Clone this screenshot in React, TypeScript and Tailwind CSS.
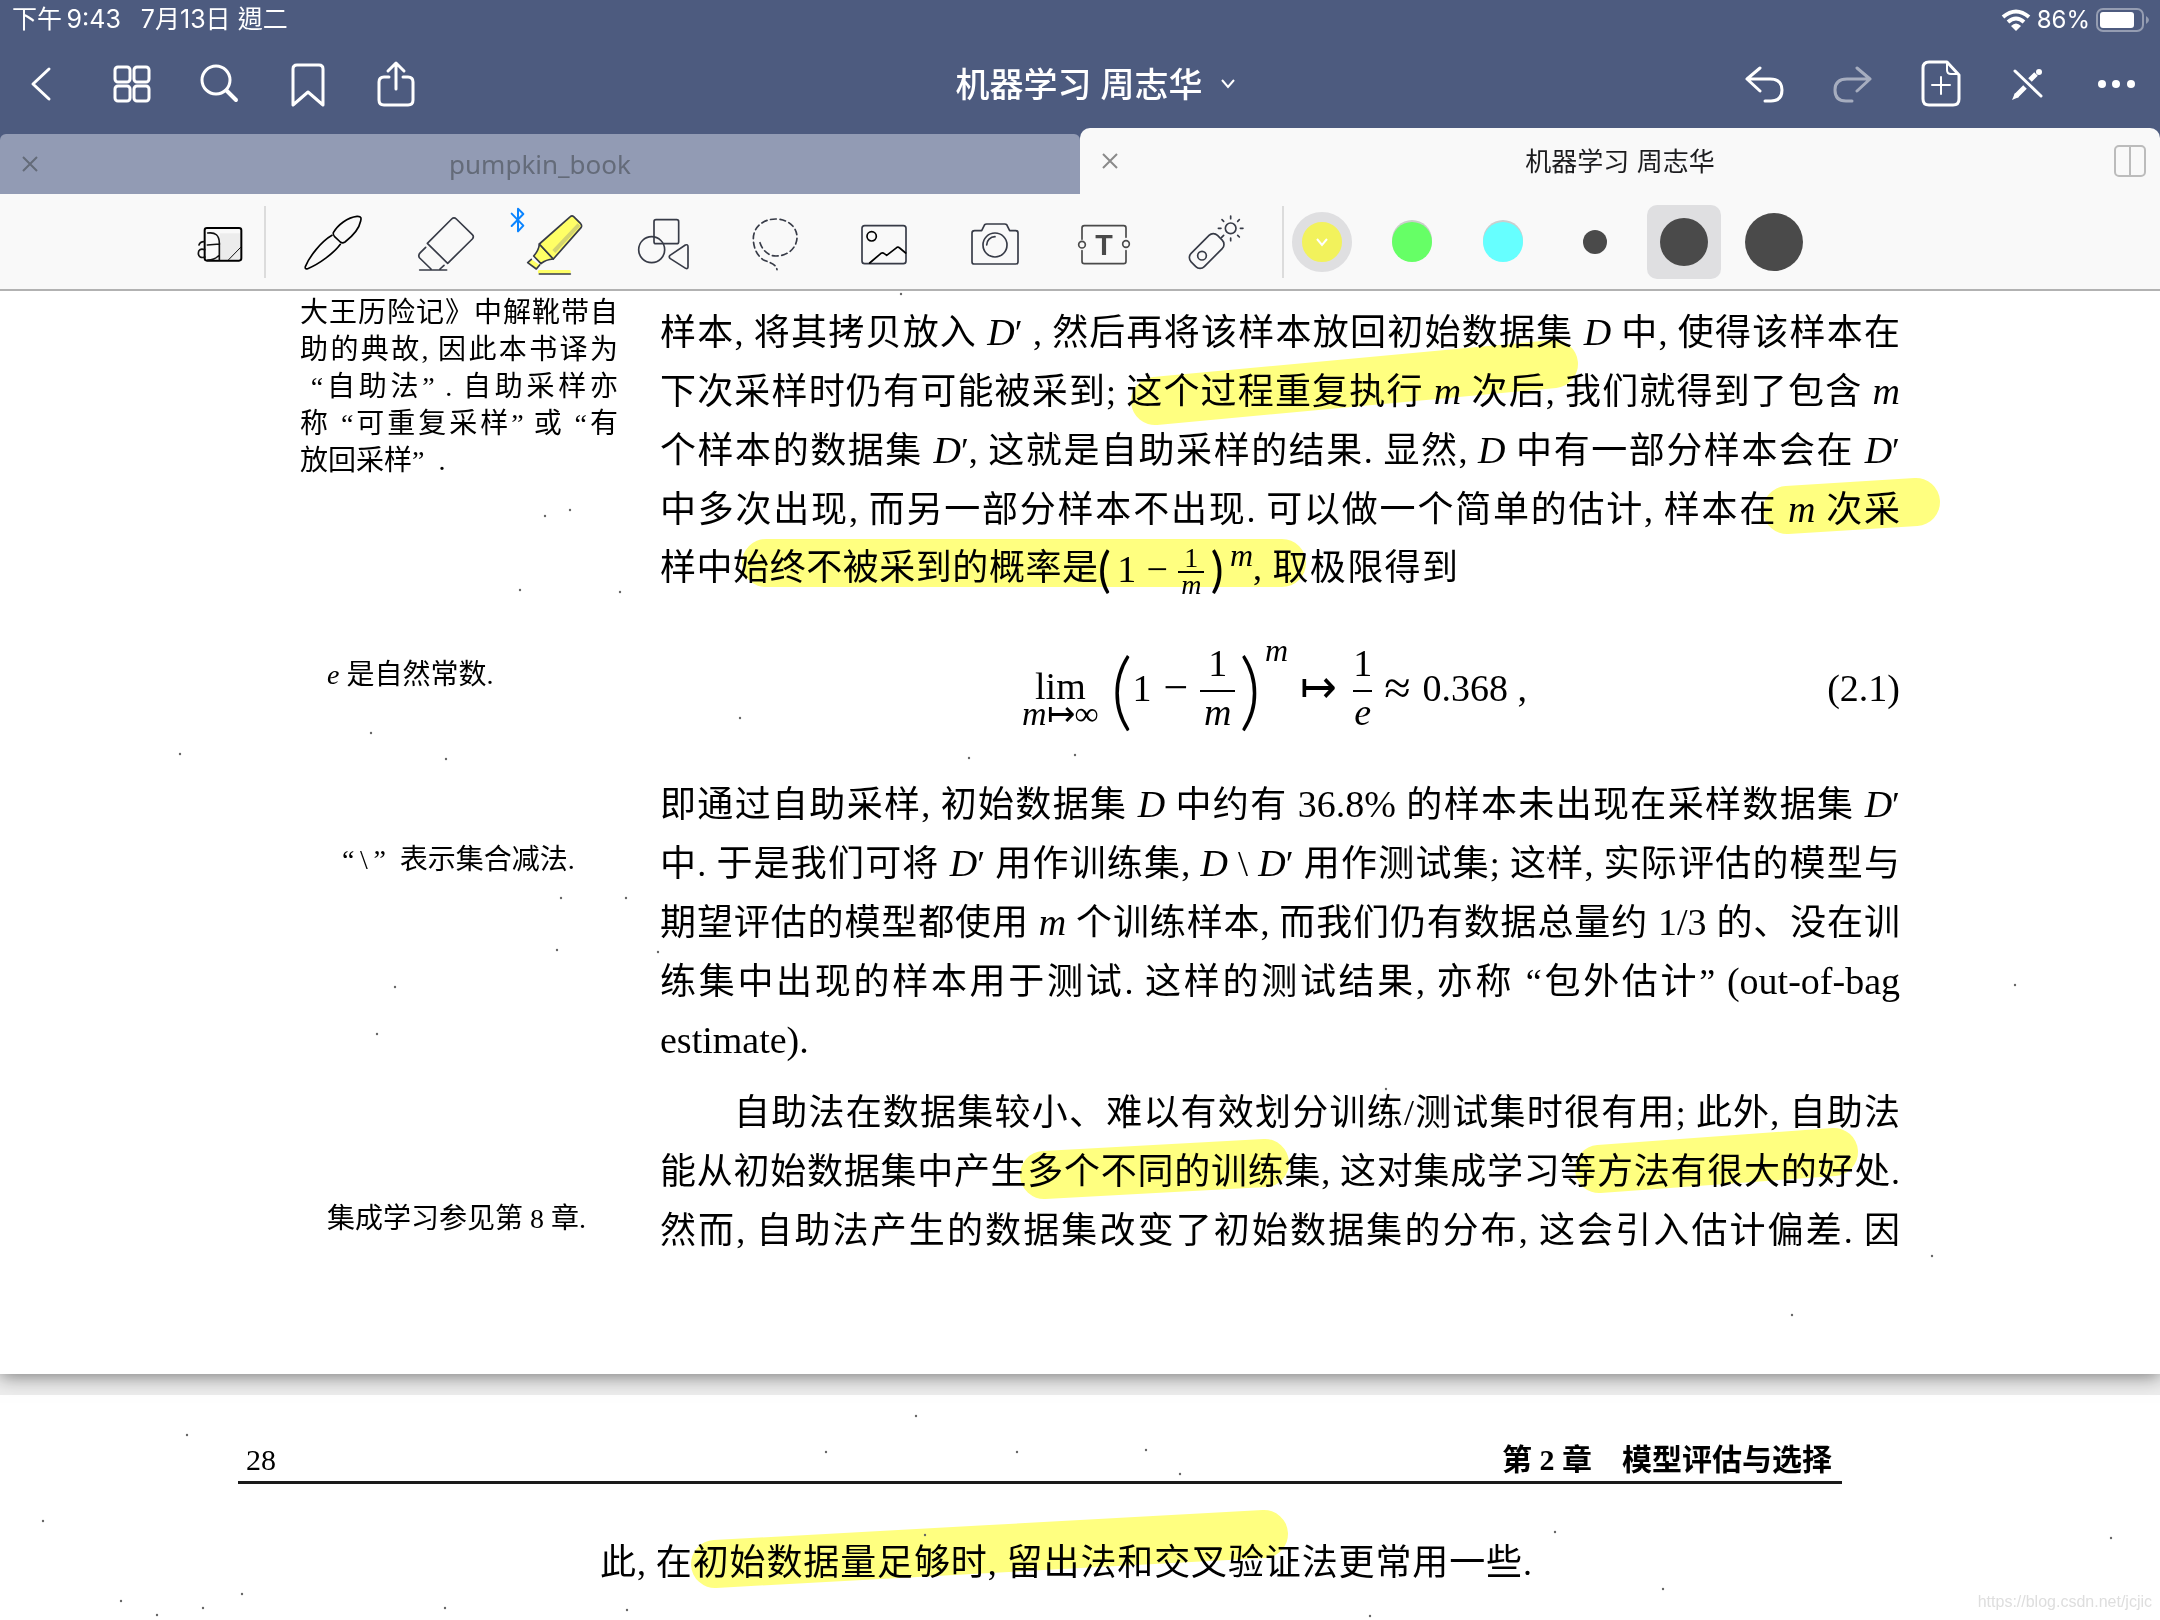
import React, { useState } from "react";

type Stroke = { x1: number; y1: number; x2: number; y2: number };

const pageOneStrokes: Stroke[] = [
  { x1: 1155, y1: 401, x2: 1554, y2: 364 },
  { x1: 1787, y1: 510, x2: 1916, y2: 502 },
  { x1: 766, y1: 563, x2: 1282, y2: 563 },
  { x1: 1044, y1: 1175, x2: 1265, y2: 1163 },
  { x1: 1599, y1: 1169, x2: 1834, y2: 1152 },
];

const pageTwoStrokes: Stroke[] = [{ x1: 715, y1: 1564, x2: 1264, y2: 1534 }];

// scanner dust on the paper
const pageOneDust = [
  [180, 754], [371, 733], [545, 516], [570, 510], [901, 294], [557, 950],
  [658, 952], [446, 759], [520, 590], [395, 987], [2015, 985], [1932, 1256],
  [1792, 1315], [1548, 858], [969, 758], [1075, 755], [377, 1034], [620, 592],
  [398, 447], [561, 898], [626, 898], [1386, 1089], [740, 718],
];

const pageTwoDust = [
  [43, 1521], [157, 1615], [627, 1610], [1017, 1452], [1146, 1450], [1180, 1474],
  [826, 1452], [187, 1435], [2111, 1538], [1555, 1532], [1663, 1589], [242, 1594],
  [121, 1601], [203, 1608], [445, 1608], [925, 1535], [1370, 1616], [916, 1416],
];

const NavButton = ({
  label,
  children,
  faded,
}: {
  label: string;
  children: React.ReactNode;
  faded?: boolean;
}) => (
  <button
    type="button"
    aria-label={label}
    className={
      "flex h-[88px] w-[88px] items-center justify-center text-white " +
      (faded ? "opacity-50" : "")
    }
  >
    <svg
      viewBox="0 0 48 48"
      className="h-12 w-12"
      fill="none"
      stroke="currentColor"
      strokeWidth="3"
      strokeLinecap="round"
      strokeLinejoin="round"
    >
      {children}
    </svg>
  </button>
);

const ToolButton = ({
  label,
  children,
}: {
  label: string;
  children: React.ReactNode;
}) => (
  <button
    type="button"
    aria-label={label}
    className="flex h-24 w-[110px] items-center justify-center"
  >
    <svg
      viewBox="0 0 192 192"
      className="h-16 w-16 overflow-visible"
      fill="none"
      stroke="#373b47"
      strokeWidth="5"
      strokeLinecap="round"
      strokeLinejoin="round"
    >
      {children}
    </svg>
  </button>
);

const CloseIcon = () => (
  <svg viewBox="0 0 16 16" className="h-4 w-4" stroke="currentColor" strokeWidth="2">
    <path d="M1 1L15 15M15 1L1 15" />
  </svg>
);

const Marks = ({
  viewBox,
  strokes,
  dust,
}: {
  viewBox: string;
  strokes: Stroke[];
  dust: number[][];
}) => (
  <svg
    viewBox={viewBox}
    className="pointer-events-none absolute left-0 top-0 w-full mix-blend-multiply"
    aria-hidden="true"
  >
    {strokes.map((s) => (
      <line key={s.x1} {...s} stroke="#ffff80" strokeWidth="48" strokeLinecap="round" />
    ))}
    {dust.map(([x, y]) => (
      <circle key={x + "-" + y} cx={x} cy={y} r="1.2" fill="#666" />
    ))}
  </svg>
);

const Line = ({ children }: { children: React.ReactNode }) => (
  <span className="block h-[59px] whitespace-nowrap text-justify [text-align-last:justify]">
    {children}
  </span>
);

const NoteLine = ({ children }: { children: React.ReactNode }) => (
  <span className="block whitespace-nowrap text-justify [text-align-last:justify]">
    {children}
  </span>
);

const V = ({ children }: { children: React.ReactNode }) => (
  <i className="text-[38px]">{children}</i>
);

const Latin = ({ children }: { children: React.ReactNode }) => (
  <span className="text-[38px]">{children}</span>
);

const InlineFormula = () => (
  <span className="flex h-[59px] w-[155px] items-center justify-between leading-none">
    <span className="text-[48px] [font-family:Lato,sans-serif]">(</span>
    <span className="text-[38px]">1</span>
    <span className="px-1 text-[38px]">−</span>
    <span className="flex flex-col items-center pt-1 text-[28px]">
      <span className="border-b-2 border-black px-[6px] leading-[26px]">1</span>
      <i className="leading-6">m</i>
    </span>
    <span className="text-[48px] [font-family:Lato,sans-serif]">)</span>
    <i className="self-start text-[32px] leading-8">m</i>
  </span>
);

const Header = () => (
  <header className="bg-[#4d5b7f] text-white">
    <div className="flex h-10 items-center justify-between pl-3 pr-[10px] text-[25px] [font-family:Inter,'Noto_Sans_CJK_TC',sans-serif]">
      <div className="flex gap-5">
        <span>下午&thinsp;9:43</span>
        <span>7月13日 週二</span>
      </div>
      <div className="flex items-center gap-[6px]">
        <svg viewBox="0 0 30 22" className="h-[22px] w-[30px]" fill="none" stroke="white" strokeWidth="4">
          <path d="M2 8Q15 -3 28 8" />
          <path d="M7 13Q15 6 23 13" />
          <path d="M10 17Q15 12 20 17L15 22Z" fill="white" stroke="none" />
        </svg>
        <span className="text-[24px]">86%</span>
        <svg viewBox="0 0 54 24" className="h-6 w-[54px]">
          <rect x="1" y="1" width="46" height="22" rx="6" fill="none" stroke="#959db2" strokeWidth="2" />
          <rect x="4" y="4" width="34" height="16" rx="3" fill="white" />
          <path d="M50 8Q53 10 53 12Q53 14 50 16Z" fill="#959db2" />
        </svg>
      </div>
    </div>

    <nav className="grid h-[88px] grid-cols-[1fr_auto_1fr] items-center">
      <div className="flex">
        <NavButton label="返回">
          <path d="M29 9L13 24L29 39" />
        </NavButton>
        <NavButton label="缩略图">
          <rect x="7" y="7" width="15" height="15" rx="3" />
          <rect x="26" y="7" width="15" height="15" rx="3" />
          <rect x="7" y="26" width="15" height="15" rx="3" />
          <rect x="26" y="26" width="15" height="15" rx="3" />
        </NavButton>
        <NavButton label="搜索">
          <circle cx="20" cy="20" r="14" />
          <path d="M31 31L40 40" strokeWidth="4" />
        </NavButton>
        <NavButton label="书签">
          <path d="M9 45V9Q9 5 13 5H35Q39 5 39 9V45L24 32Z" />
        </NavButton>
        <NavButton label="分享">
          <path d="M17 17H12Q7 17 7 22V40Q7 45 12 45H36Q41 45 41 40V22Q41 17 36 17H31" />
          <path d="M24 29V4M16 11L24 3L32 11" />
        </NavButton>
      </div>
      <button
        type="button"
        className="flex items-center gap-[18px] pl-[30px] text-[34px] font-medium [font-family:Inter,'Noto_Sans_CJK_SC',sans-serif]"
      >
        机器学习 周志华
        <svg viewBox="0 0 14 10" className="h-[10px] w-[14px]" fill="none" stroke="white" strokeWidth="2">
          <path d="M1 1L7 8L13 1" />
        </svg>
      </button>
      <div className="flex justify-end">
        <NavButton label="撤销">
          <path d="M20 8L7 19L20 31M8 19H30Q42 19 42 30Q42 41 31 41H25" />
        </NavButton>
        <NavButton label="重做" faded>
          <path d="M29 8L42 19L29 31M41 19H19Q7 19 7 30Q7 41 18 41H24" />
        </NavButton>
        <NavButton label="添加页面">
          <path d="M31 2H13Q7 2 7 8V39Q7 45 13 45H37Q43 45 43 39V15Z" />
          <path d="M31 3V10Q31 14 35 14H42M25 17V34M16 25H34" strokeWidth="2" />
        </NavButton>
        <NavButton label="只读模式">
          <path d="M11 11L37 36" />
          <path d="M12 36L21 27M26 20L32 14" strokeWidth="5" strokeLinecap="butt" />
          <path d="M11 33L15 37L8 40Z" fill="currentColor" stroke="none" />
          <circle cx="35" cy="12" r="3" fill="currentColor" stroke="none" />
        </NavButton>
        <NavButton label="更多">
          <g fill="currentColor" stroke="none">
            <circle cx="10" cy="24" r="4" />
            <circle cx="24" cy="24" r="4" />
            <circle cx="39" cy="24" r="4" />
          </g>
        </NavButton>
      </div>
    </nav>

    <div className="flex h-[66px] items-end text-[26px]">
      <div className="grid h-[60px] flex-1 grid-cols-[60px_1fr_60px] items-center rounded-t-md bg-[#929bb4] text-[#646b79]">
        <button type="button" aria-label="关闭 pumpkin_book" className="flex justify-center">
          <CloseIcon />
        </button>
        <button type="button" className="[font-family:'Noto_Sans',sans-serif]">
          pumpkin_book
        </button>
      </div>
      <div className="grid h-[66px] flex-1 grid-cols-[60px_1fr_60px] items-center rounded-t-[10px] bg-[#f9f9f9] text-[#8a8a8a]">
        <button type="button" aria-label="关闭 机器学习 周志华" className="flex justify-center">
          <CloseIcon />
        </button>
        <button
          type="button"
          className="text-[#1c1c1e] [font-family:Inter,'Noto_Sans_CJK_SC',sans-serif]"
        >
          机器学习 周志华
        </button>
        <button type="button" aria-label="分屏" className="flex justify-center">
          <svg viewBox="0 0 32 32" className="h-8 w-8" fill="none" stroke="#bcbcbc" strokeWidth="2">
            <rect x="1" y="1" width="30" height="30" rx="4" />
            <path d="M16 1V31" />
          </svg>
        </button>
      </div>
    </div>
  </header>
);

const Toolbar = () => {
  const [color, setColor] = useState("yellow");
  const [size, setSize] = useState("medium");

  return (
    <div className="relative z-20 flex h-[97px] items-center border-b-2 border-[#b2b2b2] bg-[#f9f9f9]">
      <div className="h-full w-[166px]" />
      <ToolButton label="缩放窗口">
        <rect x="92" y="70" width="62" height="78" fill="#ececec" stroke="none" />
        <rect x="47" y="54" width="110" height="98" rx="7" stroke="#000" strokeWidth="6" />
        <path d="M56 69Q91 64 91 100V149M55 105L92 102M56 150Q76 150 88 138" stroke="#111" strokeWidth="5" />
        <path d="M30 105Q33 95 45 95M47 119C34 115 28 120 28 130C28 140 36 145 48 141" stroke="#111" strokeWidth="5" />
        <path d="M119 149L155 112" stroke="#111" strokeWidth="3" />
      </ToolButton>
      <div className="h-[72px] w-[2px] -translate-x-3 bg-[#dcdcdc]" />
      <ToolButton label="钢笔">
        <g stroke="#000">
          <path d="M97 68C110 45 140 22 168 19C182 18 181 26 179 33C174 58 150 82 132 96Q124 101 118 96L100 79Q95 73 97 68Z" />
          <path d="M93 76C60 95 25 140 13 170Q11 179 20 176C55 162 100 128 118 103" />
        </g>
      </ToolButton>
      <ToolButton label="橡皮擦">
        <path d="M49 100L122 27Q129 20 136 27L184 74Q190 80 184 87L110 160Z" />
        <path d="M44 112L28 128Q20 136 26 144L60 177M99 166L87 177M26 180H107" />
      </ToolButton>
      <ToolButton label="荧光笔">
        <path d="M-28 11L7 47L-9 64V-4L7 12L-28 48" stroke="#0a84ff" strokeWidth="6" />
        <rect x="51" y="180" width="98" height="11" rx="4" fill="#ffff66" stroke="none" />
        <path d="M31 148L20 158L46 177L56 165Z" fill="#ffff66" stroke="none" />
        <path d="M31 148L20 158L46 177L56 165" />
        <path d="M55 102Q54 120 38 138L60 161Q75 148 97 147Z" fill="#ffff66" />
        <path d="M55 102L148 20Q153 15 158 20L179 41Q184 47 180 53L97 147Z" fill="#ffff66" />
        <path d="M170 40L178 48L103 129L94 120Z" fill="#d4d470" stroke="none" />
        <path d="M55 192H148" />
      </ToolButton>
      <ToolButton label="形状">
        <rect x="69" y="29" width="74" height="72" rx="6" />
        <circle cx="62" cy="119" r="39" />
        <path d="M117 136L163 105Q171 102 171 110V170Q171 178 164 175L118 146Q112 141 117 136Z" />
      </ToolButton>
      <ToolButton label="套索">
        <path
          d="M57 98C65 122 82 138 105 138C142 138 168 112 168 82C168 50 140 27 104 27C66 27 37 52 37 86C37 115 50 138 66 149C85 158 104 160 108 179"
          strokeDasharray="17 11"
        />
      </ToolButton>
      <ToolButton label="图片">
        <rect x="33" y="47" width="132" height="114" rx="8" />
        <circle cx="62" cy="79" r="14" stroke="#000" />
        <path d="M56 159L90 130Q95 127 100 131L107 136L138 112Q142 110 146 114L164 129" stroke="#000" />
      </ToolButton>
      <ToolButton label="相机">
        <path d="M41 62H62L71 44Q73 42 77 42H131Q135 42 137 44L146 62H164Q171 62 171 69V155Q171 162 164 162H40Q33 162 33 155V69Q33 62 41 62Z" />
        <circle cx="102" cy="105" r="36" />
        <path d="M77 105A25 25 0 0 1 102 80" />
      </ToolButton>
      <ToolButton label="文本">
        <g stroke="#4a4a4a">
          <path d="M33 88V54Q33 47 40 47H158Q165 47 165 54V82M33 122V154Q33 161 40 161H158Q165 161 165 154V122" />
          <circle cx="33" cy="104" r="10" />
          <circle cx="165" cy="102" r="10" />
        </g>
        <text
          x="99"
          y="134"
          textAnchor="middle"
          fill="#4a4a4a"
          stroke="none"
          className="text-[86px] font-bold [font-family:'Liberation_Sans',sans-serif]"
        >
          T
        </text>
      </ToolButton>
      <ToolButton label="激光笔">
        <rect x="49" y="67" width="56" height="112" rx="18" transform="rotate(45 77 123)" />
        <circle cx="63" cy="137" r="13" />
        <circle cx="149" cy="55" r="16" />
        <path d="M149 18V26M149 84V92M112 55H120M178 55H186M123 29L128 34M170 76L175 81M175 29L170 34M128 76L122 82" />
      </ToolButton>
      <div className="ml-[14px] h-[72px] w-[2px] bg-[#dcdcdc]" />
      <fieldset aria-label="颜色" className="flex">
        <label className="relative flex w-[76px] items-center justify-center">
          <input
            type="radio"
            name="color"
            aria-label="黄色"
            checked={color === "yellow"}
            onChange={() => setColor("yellow")}
            className="h-[60px] w-[60px] appearance-none rounded-full border-[10px] border-[#dfdfe1] bg-[#f2f25c]"
          />
          <svg
            viewBox="0 0 14 10"
            className="pointer-events-none absolute h-[10px] w-[14px]"
            fill="none"
            stroke="white"
            strokeWidth="2"
          >
            <path d="M2 2L7 8L12 2" />
          </svg>
        </label>
        <label className="flex w-[104px] items-center justify-center">
          <input
            type="radio"
            name="color"
            aria-label="绿色"
            checked={color === "green"}
            onChange={() => setColor("green")}
            className="h-10 w-10 appearance-none rounded-full bg-[#66ff66] shadow-[0_-2px_0_#c9cfc9]"
          />
        </label>
        <label className="flex w-[78px] items-center justify-center">
          <input
            type="radio"
            name="color"
            aria-label="青色"
            checked={color === "cyan"}
            onChange={() => setColor("cyan")}
            className="h-10 w-10 appearance-none rounded-full bg-[#66ffff] shadow-[0_-2px_0_#c9cfcf]"
          />
        </label>
      </fieldset>
      <fieldset aria-label="粗细" className="flex">
        <label className="flex w-[105px] items-center justify-center">
          <input
            type="radio"
            name="size"
            aria-label="细"
            checked={size === "thin"}
            onChange={() => setSize("thin")}
            className="h-6 w-6 appearance-none rounded-full bg-[#4a4a4a]"
          />
        </label>
        <label className="flex h-[74px] w-[74px] items-center justify-center rounded-[10px] bg-[#dfdfe1]">
          <input
            type="radio"
            name="size"
            aria-label="中"
            checked={size === "medium"}
            onChange={() => setSize("medium")}
            className="h-12 w-12 appearance-none rounded-full bg-[#4a4a4a]"
          />
        </label>
        <label className="flex w-[106px] items-center justify-center">
          <input
            type="radio"
            name="size"
            aria-label="粗"
            checked={size === "thick"}
            onChange={() => setSize("thick")}
            className="h-[58px] w-[58px] appearance-none rounded-full bg-[#4a4a4a]"
          />
        </label>
      </fieldset>
    </div>
  );
};

const PageOne = () => (
  <section className="relative z-10 bg-white pb-[113px] pl-[300px] pr-[260px] shadow-[0_2px_18px_rgba(0,0,0,0.5)]">
    <Marks viewBox="0 291 2160 1083" strokes={pageOneStrokes} dust={pageOneDust} />
    <div className="grid grid-cols-[318px_1fr] gap-x-[42px]">
      <aside className="pt-[3px] text-[28px] leading-[37px]">
        <NoteLine>大王历险记》中解靴带自</NoteLine>
        <NoteLine>助的典故, 因此本书译为</NoteLine>
        <NoteLine>&nbsp;“自助法” . 自助采样亦</NoteLine>
        <NoteLine>称 “可重复采样” 或 “有</NoteLine>
        <span className="block">放回采样”&ensp;.</span>
      </aside>
      <p className="pt-3">
        <Line>
          样本, 将其拷贝放入 <V>D</V>′ , 然后再将该样本放回初始数据集 <V>D</V> 中, 使得该样本在
        </Line>
        <Line>
          下次采样时仍有可能被采到; 这个过程重复执行 <V>m</V> 次后, 我们就得到了包含 <V>m</V>
        </Line>
        <Line>
          个样本的数据集 <V>D</V>′, 这就是自助采样的结果. 显然, <V>D</V> 中有一部分样本会在 <V>D</V>′
        </Line>
        <Line>
          中多次出现, 而另一部分样本不出现. 可以做一个简单的估计, 样本在 <V>m</V> 次采
        </Line>
        <span className="flex h-[59px] whitespace-nowrap">
          <span className="w-[438px] text-justify [text-align-last:justify]">
            样中始终不被采到的概率是
          </span>
          <InlineFormula />
          <span className="w-[205px] text-justify [text-align-last:justify]">, 取极限得到</span>
        </span>
      </p>

      <aside className="pl-[27px] pt-[58px] text-[28px] leading-[37px]">
        <i>e</i> 是自然常数.
      </aside>
      <div className="flex h-[177px] items-center pt-[2px] text-[38px] leading-none">
        <div className="ml-[362px] flex flex-col items-center pt-[22px]">
          <span className="leading-[30px]">lim</span>
          <span className="text-[34px] leading-[26px]">
            <i>m</i>↦∞
          </span>
        </div>
        <span className="pl-3 text-[84px] font-light [font-family:Lato,sans-serif]">(</span>
        <span>1</span>
        <span className="px-3 text-[44px]">−</span>
        <span className="flex flex-col items-center">
          <span className="border-b-2 border-black px-2 pb-2">1</span>
          <i className="leading-10">m</i>
        </span>
        <span className="pl-1 text-[84px] font-light [font-family:Lato,sans-serif]">)</span>
        <i className="-mt-[76px] pl-1 text-[32px]">m</i>
        <span className="pl-3 text-[44px]">↦</span>
        <span className="ml-4 flex flex-col items-center">
          <span className="border-b-2 border-black pb-2">1</span>
          <i className="leading-10">e</i>
        </span>
        <span className="pl-3 text-[48px]">≈</span>
        <span className="pl-3">0.368 ,</span>
        <span className="ml-auto">(2.1)</span>
      </div>

      <aside className="pl-[42px] pt-[66px] text-[28px] leading-[37px]">
        “&thinsp;\&thinsp;”&ensp;表示集合减法.
      </aside>
      <p>
        <Line>
          即通过自助采样, 初始数据集 <V>D</V> 中约有 <Latin>36.8%</Latin> 的样本未出现在采样数据集{" "}
          <V>D</V>′
        </Line>
        <Line>
          中. 于是我们可将 <V>D</V>′ 用作训练集, <V>D</V> \ <V>D</V>′ 用作测试集; 这样,
          实际评估的模型与
        </Line>
        <Line>
          期望评估的模型都使用 <V>m</V> 个训练样本, 而我们仍有数据总量约 <Latin>1/3</Latin>{" "}
          的、没在训
        </Line>
        <Line>
          练集中出现的样本用于测试. 这样的测试结果, 亦称 “包外估计” <Latin>(out-of-bag</Latin>
        </Line>
        <span className="block h-[59px]">
          <Latin>estimate).</Latin>
        </span>
      </p>

      <aside className="pl-[27px] pt-[130px] text-[28px] leading-[37px]">
        集成学习参见第 8 章.
      </aside>
      <p className="pt-[14px]">
        <span className="block pl-[74px]">
          <Line>自助法在数据集较小、难以有效划分训练/测试集时很有用; 此外, 自助法</Line>
        </span>
        <Line>能从初始数据集中产生多个不同的训练集, 这对集成学习等方法有很大的好处.</Line>
        <Line>然而, 自助法产生的数据集改变了初始数据集的分布, 这会引入估计偏差. 因</Line>
      </p>
    </div>
  </section>
);

const PageTwo = () => (
  <section className="relative flex-1 bg-white pb-4 pl-[238px] pr-[318px] pt-[43px]">
    <Marks viewBox="0 1395 2160 225" strokes={pageTwoStrokes} dust={pageTwoDust} />
    <div className="flex h-[43px] items-center justify-between pl-2 pr-[10px] text-[30px] leading-[43px]">
      <span>28</span>
      <h2 className="font-bold">第 2 章&emsp;模型评估与选择</h2>
    </div>
    <hr className="border-t-[3px] border-[#1a1a1a]" />
    <p className="ml-[362px] mt-[50px] w-[932px]">
      <Line>此, 在初始数据量足够时, 留出法和交叉验证法更常用一些.</Line>
    </p>
    <a
      href="https://blog.csdn.net/jcjic"
      className="absolute bottom-2 right-2 text-[16px] leading-5 text-[#dedede] [font-family:'Liberation_Sans',sans-serif]"
    >
      https://blog.csdn.net/jcjic
    </a>
  </section>
);

const App = () => {
  return (
    <div className="flex min-h-screen flex-col bg-[#ededed]">
      <Header />
      <Toolbar />
      <main
        lang="zh-CN"
        className="flex flex-1 flex-col gap-[21px] text-[36px] leading-[59px] text-black [font-family:'Liberation_Serif','Noto_Sans_CJK_SC',serif]"
      >
        <PageOne />
        <PageTwo />
      </main>
    </div>
  );
};

export default App;
